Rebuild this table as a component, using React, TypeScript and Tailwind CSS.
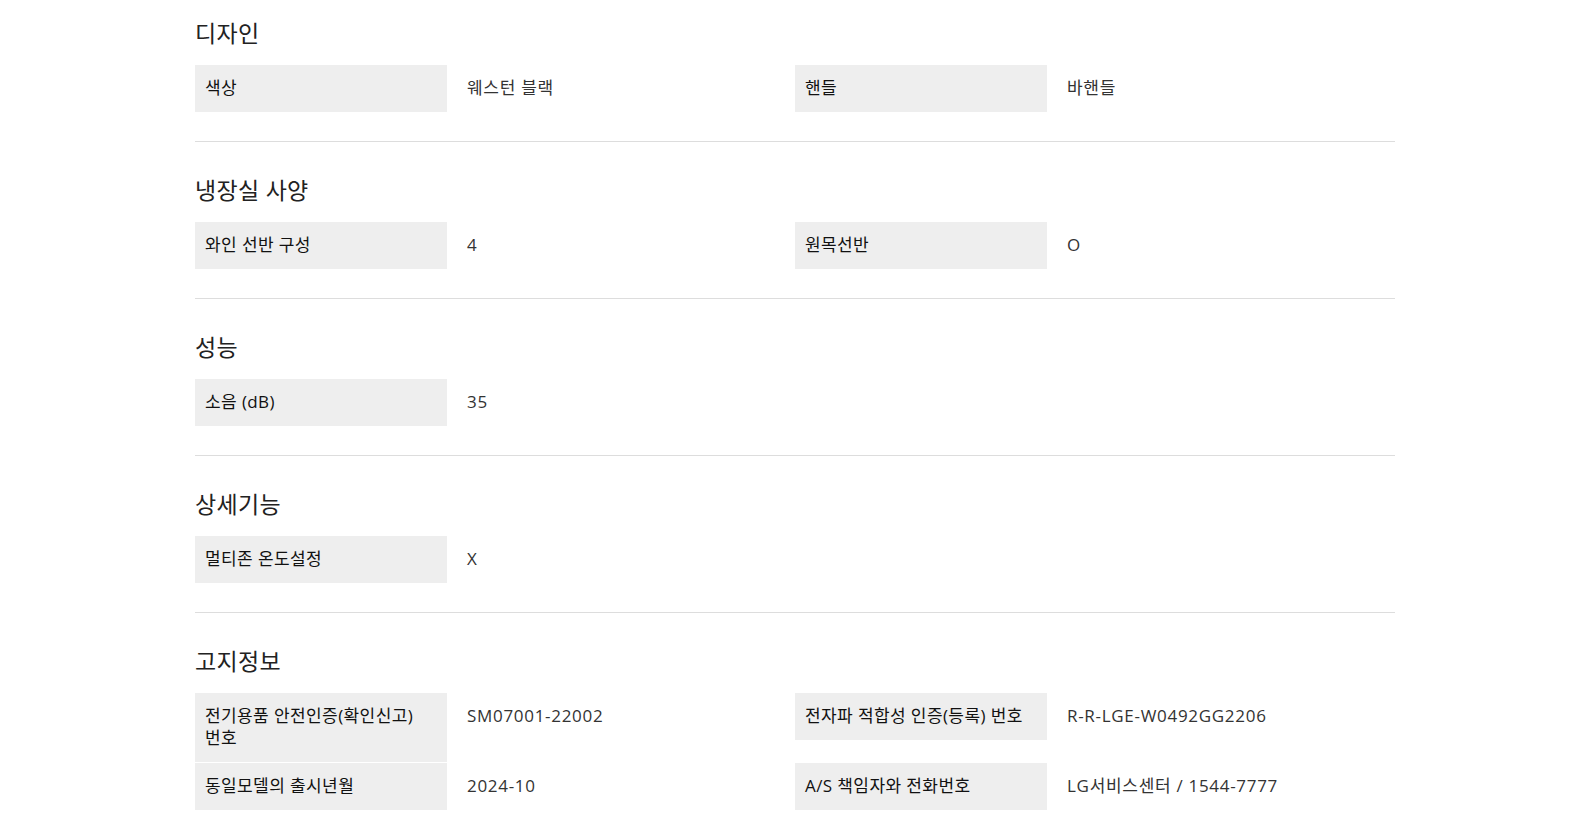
type Spec = { label: string; value: string };

type Section = { title: string; specs: Spec[] };

const sections: Section[] = [
  {
    title: "디자인",
    specs: [
      { label: "색상", value: "웨스턴 블랙" },
      { label: "핸들", value: "바핸들" },
    ],
  },
  {
    title: "냉장실 사양",
    specs: [
      { label: "와인 선반 구성", value: "4" },
      { label: "원목선반", value: "O" },
    ],
  },
  {
    title: "성능",
    specs: [{ label: "소음 (dB)", value: "35" }],
  },
  {
    title: "상세기능",
    specs: [{ label: "멀티존 온도설정", value: "X" }],
  },
  {
    title: "고지정보",
    specs: [
      { label: "전기용품 안전인증(확인신고) 번호", value: "SM07001-22002" },
      { label: "전자파 적합성 인증(등록) 번호", value: "R-R-LGE-W0492GG2206" },
      { label: "동일모델의 출시년월", value: "2024-10" },
      { label: "A/S 책임자와 전화번호", value: "LG서비스센터 / 1544-7777" },
    ],
  },
];

function SpecItem({ spec }: { spec: Spec }) {
  return (
    <div className="flex items-start">
      <dt className="w-[252px] shrink-0 bg-[#eeeeee] pl-[10px] pr-4 pt-3 pb-[13px] text-[17px] leading-[22px] tracking-[0.4px] text-[#111111]">
        {spec.label}
      </dt>
      <dd className="flex-1 pl-5 pt-3 pb-[13px] text-[17px] leading-[22px] tracking-[0.7px] text-[#333333]">
        {spec.value}
      </dd>
    </div>
  );
}

export default function App() {
  return (
    <div
      className="min-h-screen bg-white"
      style={{ fontFamily: '"Open Sans", "Noto Sans CJK KR", sans-serif' }}
    >
      <div className="ml-[195px] w-[1200px]">
        {sections.map((section, index) => (
          <section
            key={section.title}
            className={`${index === 0 ? "pt-[17px]" : "pt-8"} ${
              index < sections.length - 1 ? "border-b border-[#dddddd] pb-[29px]" : "pb-6"
            }`}
          >
            <h3 className="mb-4 text-[23px] font-normal leading-[32px] tracking-[0.3px] text-[#222222]">
              {section.title}
            </h3>
            <dl className="grid grid-cols-2 items-start gap-y-px">
              {section.specs.map((spec) => (
                <SpecItem key={spec.label} spec={spec} />
              ))}
            </dl>
          </section>
        ))}
      </div>
    </div>
  );
}
